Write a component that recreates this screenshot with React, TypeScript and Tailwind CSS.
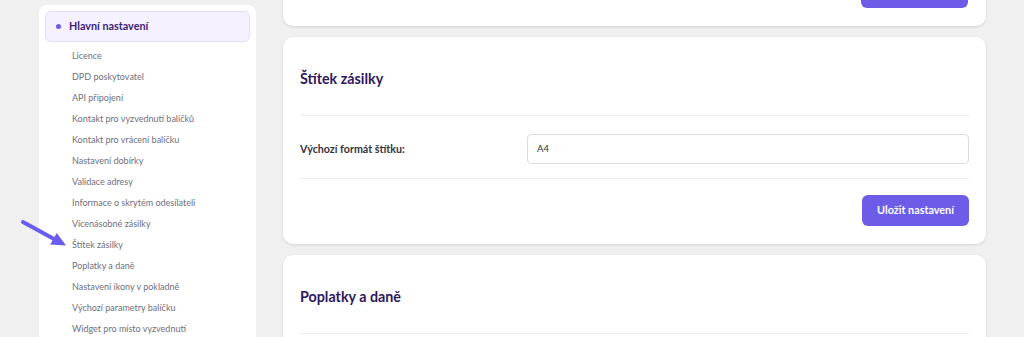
const polozky = [
  "Licence",
  "DPD poskytovatel",
  "API připojení",
  "Kontakt pro vyzvednutí balíčků",
  "Kontakt pro vrácení balíčku",
  "Nastavení dobírky",
  "Validace adresy",
  "Informace o skrytém odesílateli",
  "Vícenásobné zásilky",
  "Štítek zásilky",
  "Poplatky a daně",
  "Nastavení ikony v pokladně",
  "Výchozí parametry balíčku",
  "Widget pro místo vyzvednutí",
];

function Sipka() {
  return (
    <svg
      className="pointer-events-none absolute left-[15px] top-[210px]"
      width="60"
      height="45"
      viewBox="0 0 60 45"
    >
      <line x1="8" y1="12" x2="39" y2="29" stroke="#6a5cf0" strokeWidth="4" strokeLinecap="round" />
      <polygon points="51,35.5 35.2,34.6 41.8,23" fill="#6a5cf0" />
    </svg>
  );
}

function Tlacitko() {
  return (
    <button className="h-[31px] w-[107px] rounded-md bg-[#6c5ce7] text-[10.8px] font-bold text-white">
      Uložit nastavení
    </button>
  );
}

function Sidebar() {
  return (
    <aside className="w-[217px] shrink-0 self-start rounded-lg bg-white px-[6px] pt-[6px] pb-4">
      <div className="flex h-[31px] items-center gap-[8px] rounded-md border border-[#e6dcfb] bg-[#f5f1fe] pl-[10px]">
        <span className="h-[5px] w-[5px] rounded-full bg-[#6c5ce7]" />
        <span className="text-[10.8px] font-bold text-[#3b2377]">Hlavní nastavení</span>
      </div>
      <ul className="mt-[3px] pl-[27px]">
        {polozky.map((p) => (
          <li key={p} className="text-[9px] leading-[21px] text-[#6f6f7d]">
            {p}
          </li>
        ))}
      </ul>
    </aside>
  );
}

export default function App() {
  return (
    <div className="relative h-[337px] overflow-hidden bg-[#f0f0f0] font-['Lato',sans-serif]">
      <div className="flex gap-[27px] pt-[5px] pl-[39px]">
        <Sidebar />
        <main className="flex w-[703px] flex-col gap-[11px]">
          <section className="-mt-[28px] flex justify-end rounded-b-[10px] bg-white px-[18px] pb-[18px] shadow-[0_1px_3px_rgba(0,0,0,0.12)]">
            <Tlacitko />
          </section>
          <section className="rounded-[10px] bg-white px-[17px] pt-[32px] pb-[18px] shadow-[0_1px_3px_rgba(0,0,0,0.12)]">
            <h2 className="pb-[26px] text-[14.3px] leading-[20px] font-bold text-[#2e1760]">Štítek zásilky</h2>
            <div className="flex items-center border-y border-[#ececec] pt-[18px] pb-[14px]">
              <label className="w-[227px] text-[10.7px] font-bold text-[#33333d]">Výchozí formát štítku:</label>
              <div className="flex h-[30px] flex-1 items-center rounded border border-[#dcdcdc] px-[9px] text-[9.5px] text-[#333]">
                A4
              </div>
            </div>
            <div className="mt-[16px] flex justify-end">
              <Tlacitko />
            </div>
          </section>
          <section className="rounded-[10px] bg-white px-[17px] pt-[32px] shadow-[0_1px_3px_rgba(0,0,0,0.12)]">
            <h2 className="border-b border-[#ececec] pb-[26px] text-[14.3px] leading-[20px] font-bold text-[#2e1760]">
              Poplatky a daně
            </h2>
            <div className="h-10" />
          </section>
        </main>
      </div>
      <Sipka />
    </div>
  );
}
